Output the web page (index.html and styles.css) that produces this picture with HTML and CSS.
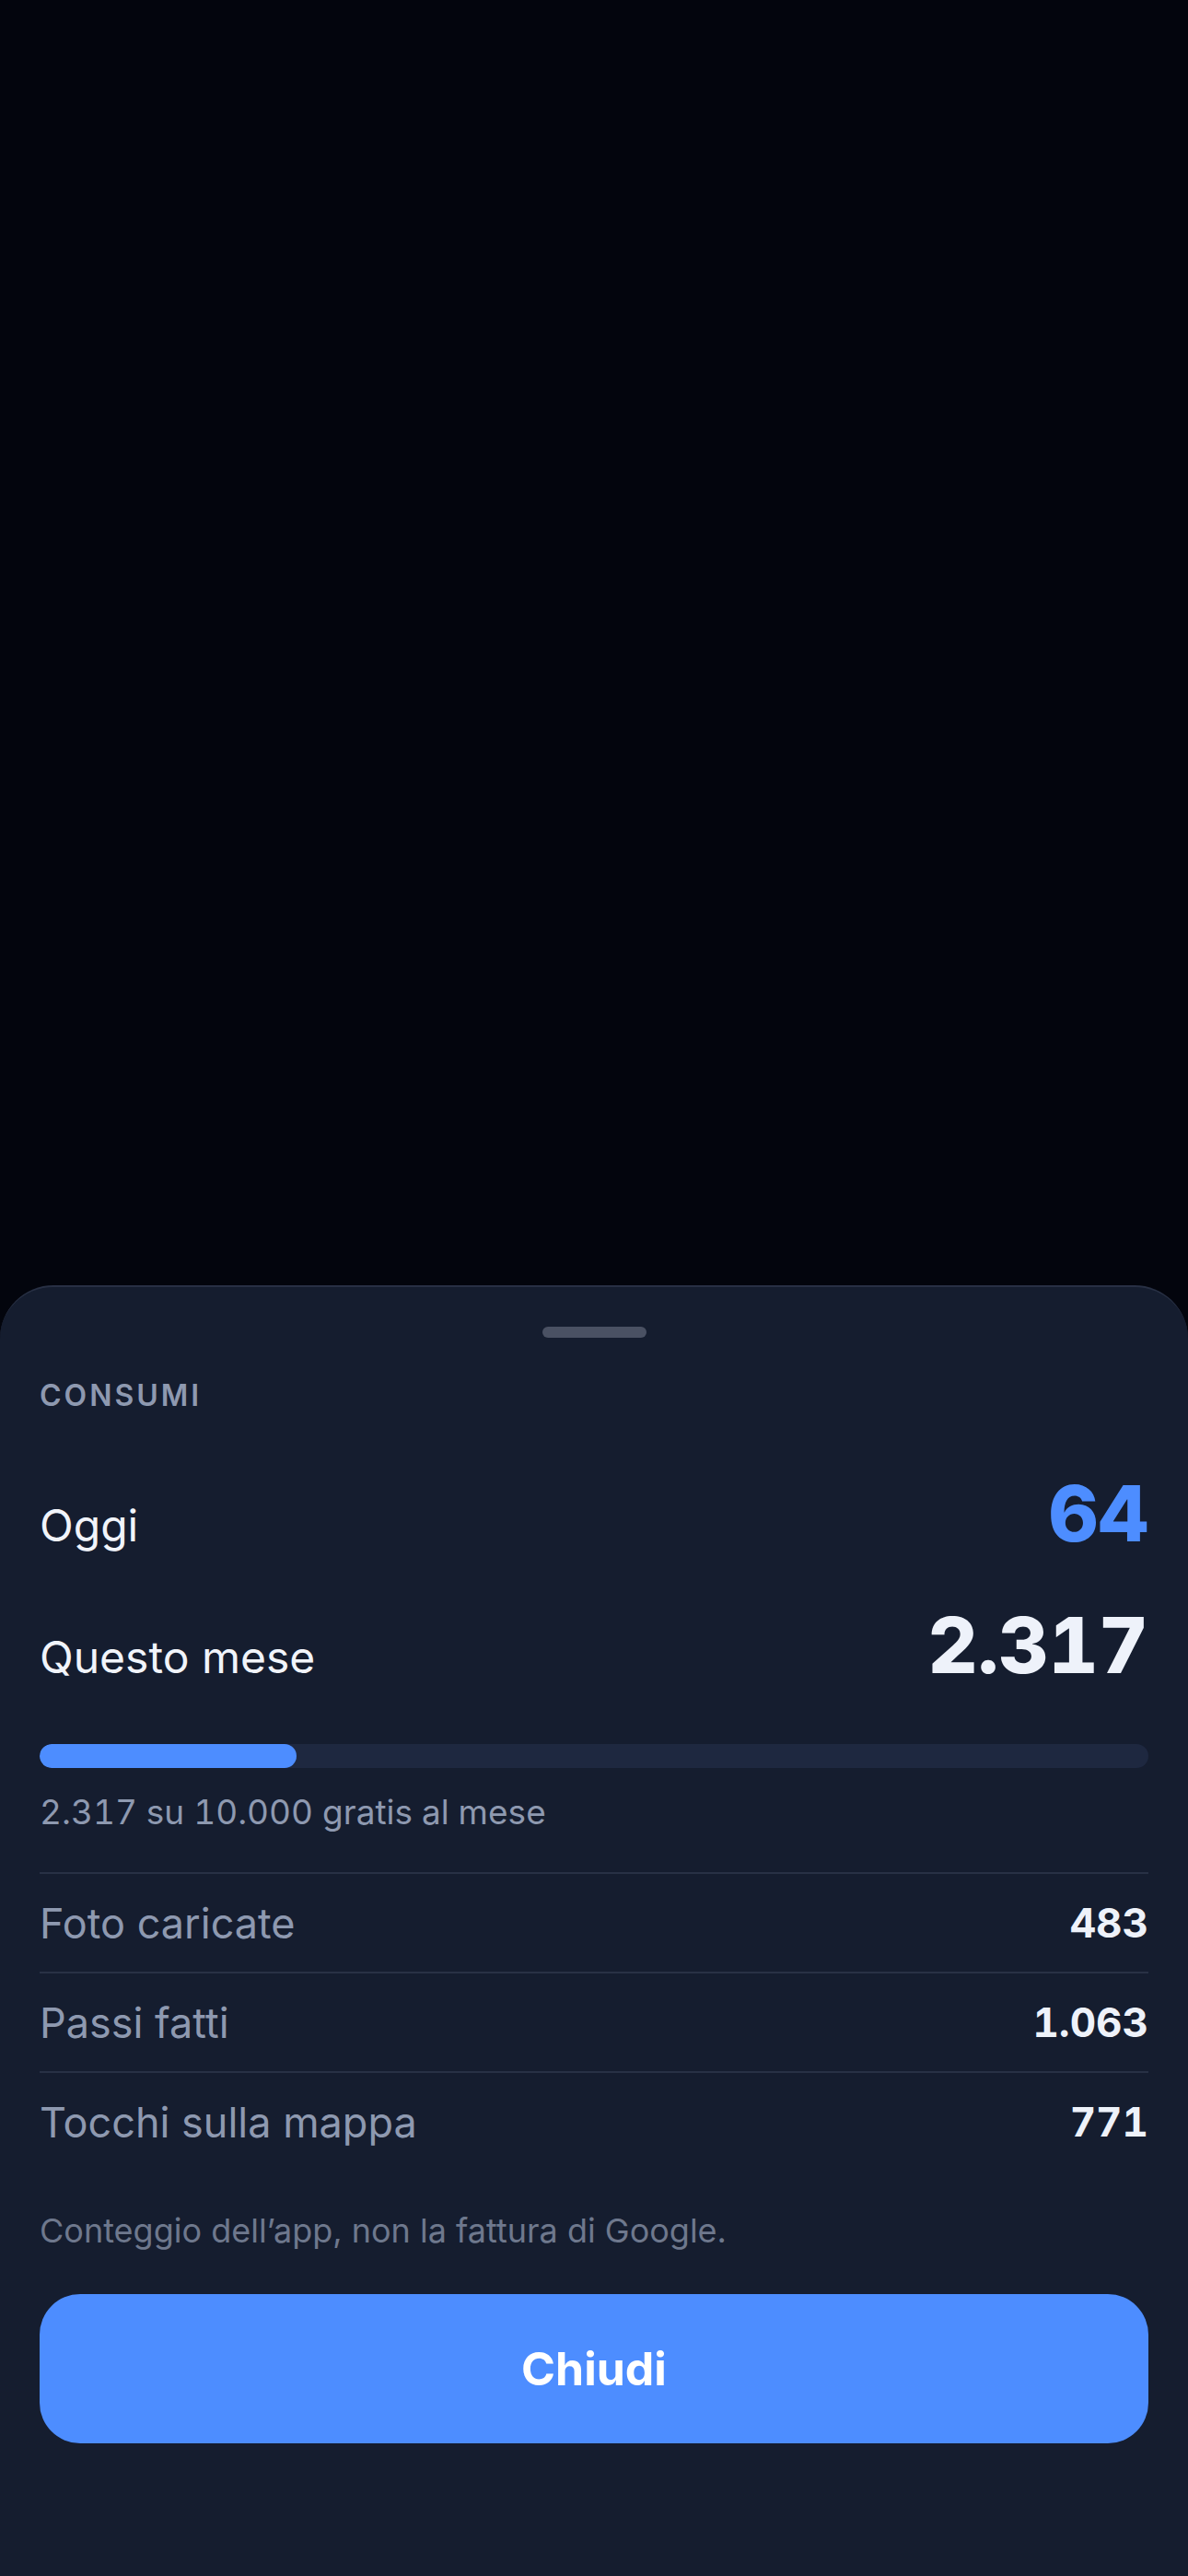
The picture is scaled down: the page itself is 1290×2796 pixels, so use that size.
FILE: index.html
```html
<!DOCTYPE html>
<html lang="it">
<head>
    <meta charset="UTF-8">
    <meta name="viewport" content="width=device-width, initial-scale=1.0">
    <title>Consumi</title>
    <link rel="stylesheet" href="styles.css">
</head>
<body>
<div class="backdrop"></div>

<div class="sheet">
    <div class="handle"></div>

    <h4 class="section-title">CONSUMI</h4>

    <div class="big-row today">
        <span class="big-label">Oggi</span>
        <span class="big-value accent">64</span>
    </div>

    <div class="big-row month">
        <span class="big-label">Questo mese</span>
        <span class="big-value">2.317</span>
    </div>

    <div class="bar">
        <div class="bar-fill" style="width: 23.17%"></div>
    </div>
    <p class="bar-caption">2.317 su 10.000 gratis al mese</p>

    <ul class="stats">
        <li><span>Foto caricate</span><b>483</b></li>
        <li><span>Passi fatti</span><b>1.063</b></li>
        <li><span>Tocchi sulla mappa</span><b>771</b></li>
    </ul>

    <p class="note">Conteggio dell’app, non la fattura di Google.</p>

    <button class="close-btn">Chiudi</button>
</div>
</body>
</html>
```

FILE: styles.css
```css
html, body {
    margin: 0;
    padding: 0;
}

body {
    width: 1290px;
    height: 2796px;
    background-color: #03050d;
    font-family: Inter, "Noto Sans", sans-serif;
    display: flex;
    flex-direction: column;
    overflow: hidden;
}

.backdrop {
    flex: 1;
}

.sheet {
    height: 1401px;
    box-sizing: border-box;
    background-color: #151d2f;
    border-top: 2px solid #283044;
    border-radius: 58px 58px 0 0;
    padding: 43px 43px 0 43px;
    display: flex;
    flex-direction: column;
}

.handle {
    align-self: center;
    width: 113px;
    height: 12px;
    border-radius: 6px;
    background-color: #4a5163;
}

.section-title {
    margin: 43px 0 0 0;
    font-size: 32px;
    line-height: 40px;
    font-weight: 600;
    letter-spacing: 3px;
    color: #8e99b0;
}

.big-row {
    display: flex;
    justify-content: space-between;
    align-items: baseline;
    height: 100px;
}

.big-row.today {
    margin-top: 58px;
}

.big-row.month {
    margin-top: 43px;
}

.big-label {
    font-size: 48px;
    line-height: 72px;
    color: #f1f4fa;
}

.big-value {
    font-size: 84px;
    line-height: 100px;
    font-weight: 800;
    color: #eef2fa;
    font-variant-numeric: tabular-nums;
}

.big-value.accent {
    color: #4d8dff;
}

.bar {
    margin-top: 57px;
    height: 26px;
    border-radius: 13px;
    background-color: #1e2840;
    overflow: hidden;
}

.bar-fill {
    height: 100%;
    border-radius: 13px;
    background-color: #4d8dff;
}

.bar-caption {
    margin: 26px 0 0 0;
    font-size: 37px;
    line-height: 44px;
    color: #8e99b0;
    font-variant-numeric: tabular-nums;
}

.stats {
    list-style: none;
    margin: 43px 0 0 0;
    padding: 0;
}

.stats li {
    display: flex;
    justify-content: space-between;
    align-items: center;
    height: 106px;
    border-top: 2px solid #283145;
}

.stats span {
    font-size: 45px;
    color: #8e99b0;
}

.stats b {
    font-size: 44px;
    font-weight: 700;
    color: #eef2fa;
    font-variant-numeric: tabular-nums;
}

.note {
    margin: 43px 0 0 0;
    font-size: 36px;
    line-height: 44px;
    color: #6e788d;
}

.close-btn {
    margin-top: 47px;
    height: 162px;
    border: none;
    border-radius: 44px;
    background-color: #4d8dff;
    color: #fff;
    font-family: Inter, "Noto Sans", sans-serif;
    font-size: 50px;
    font-weight: 700;
    cursor: pointer;
}
```
